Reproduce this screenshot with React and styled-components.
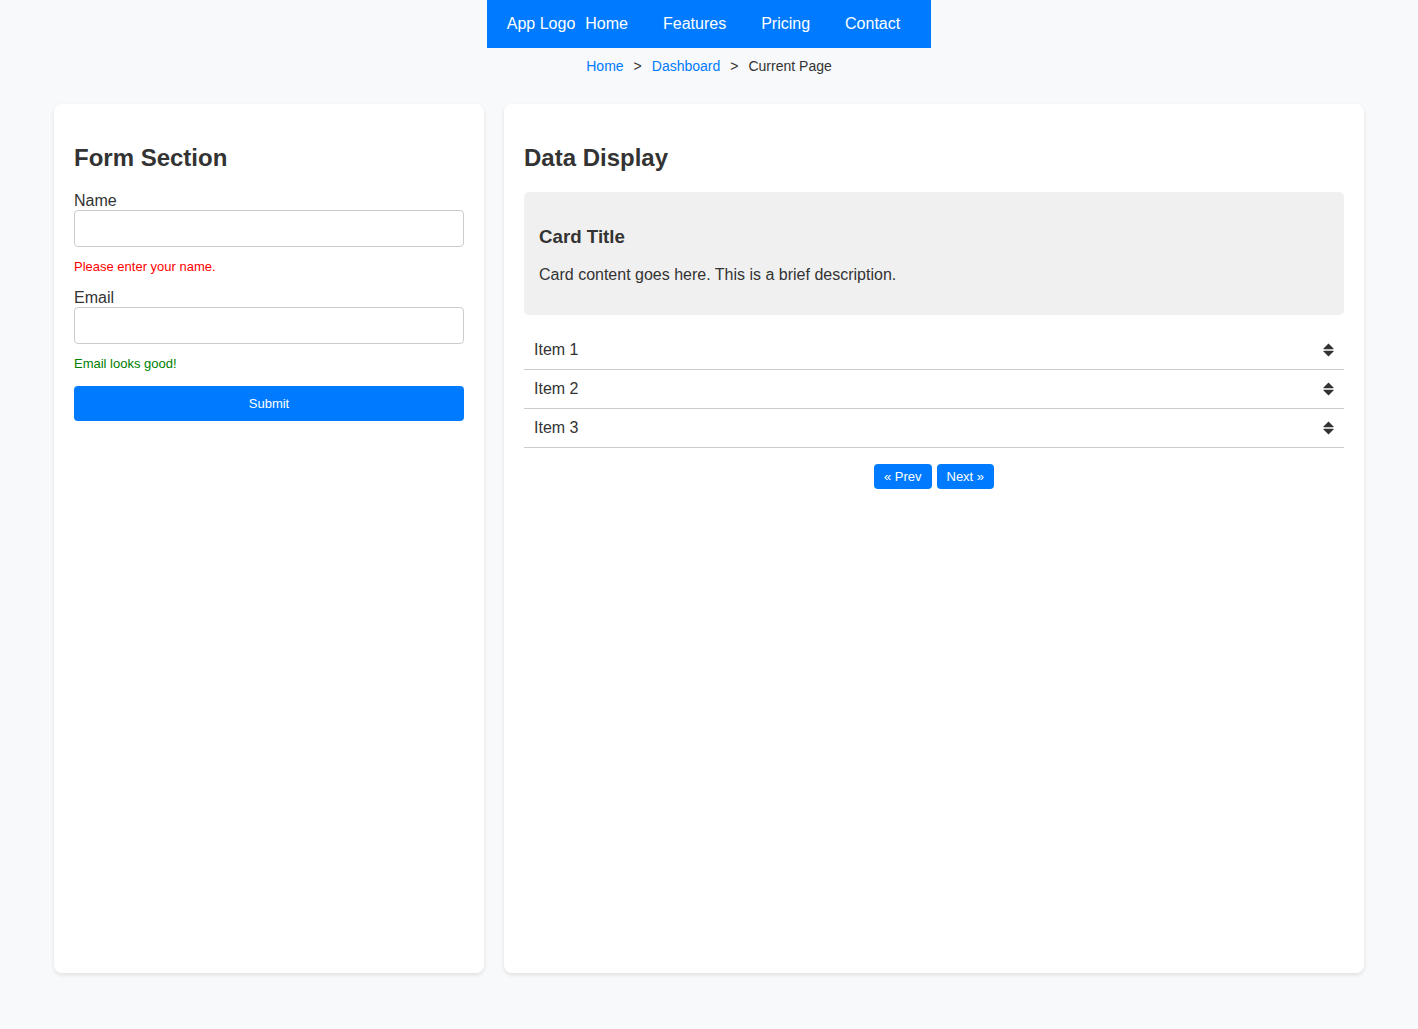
import React from 'react';
import styled, { createGlobalStyle } from 'styled-components';

const GlobalStyle = createGlobalStyle`
  * {
    box-sizing: border-box;
  }

  body {
    margin: 0;
    background-color: #f8f9fa;
    font-family: 'Liberation Sans', Arial, sans-serif;
    color: #333;
  }
`;

const NavBar = styled.nav`
  display: flex;
  align-items: center;
  width: max-content;
  margin: 0 auto;
  padding: 15px 31px 15px 20px;
  background-color: #007bff;
  color: #fff;
  font-size: 16px;
  line-height: 18px;
`;

const Logo = styled.span`
  margin-right: 10px;
`;

const NavLinks = styled.div`
  display: flex;
  gap: 35px;
`;

const NavLink = styled.a`
  color: #fff;
  text-decoration: none;
`;

const Breadcrumb = styled.div`
  display: flex;
  justify-content: center;
  gap: 10px;
  padding: 10px;
  font-size: 14px;
  line-height: 16px;
`;

const Crumb = styled.a`
  color: ${(p) => (p.current ? '#333' : '#007bff')};
  text-decoration: none;
`;

const Container = styled.main`
  display: grid;
  grid-template-columns: 1fr 2fr;
  gap: 20px;
  max-width: 1350px;
  margin: 0 auto;
  padding: 20px;
`;

const Panel = styled.section`
  min-height: calc(100vh - 160px);
  padding: 20px;
  background-color: #fff;
  border-radius: 8px;
  box-shadow: 0 2px 4px rgba(0, 0, 0, 0.1);
`;

const Heading = styled.h2`
  margin: 20px 0;
  font-size: 24px;
  line-height: 28px;
`;

const FormGroup = styled.div`
  margin-bottom: 15px;
`;

const Label = styled.label`
  display: block;
  font-size: 16px;
  line-height: 18px;
`;

const Input = styled.input`
  display: block;
  width: 100%;
  height: 37px;
  margin-bottom: 12px;
  padding: 8px;
  border: 1px solid #ccc;
  border-radius: 4px;
  font-size: 16px;
  font-family: inherit;
`;

const Message = styled.div`
  font-size: 13px;
  line-height: 15px;
  color: ${(p) => (p.ok ? 'green' : 'red')};
`;

const SubmitButton = styled.button`
  width: 100%;
  height: 35px;
  border: none;
  border-radius: 4px;
  background-color: #007bff;
  color: #fff;
  font-size: 13px;
  font-family: inherit;
`;

const Card = styled.div`
  padding: 15px;
  background-color: #f0f0f0;
  border-radius: 5px;

  h3 {
    margin: 19px 0 18px;
    font-size: 18.72px;
    line-height: 22px;
  }

  p {
    margin: 16px 0;
    font-size: 16px;
    line-height: 18px;
  }
`;

const List = styled.ul`
  margin: 16px 0;
  padding: 0;
  list-style: none;
`;

const ListItem = styled.li`
  display: flex;
  align-items: center;
  justify-content: space-between;
  padding: 10px;
  border-bottom: 1px solid #ccc;
  font-size: 16px;
  line-height: 18px;
`;

const Pagination = styled.div`
  display: flex;
  justify-content: center;
  gap: 5px;
`;

const PageButton = styled.button`
  height: 25px;
  padding: 0 10px;
  border: none;
  border-radius: 4px;
  background-color: #007bff;
  color: #fff;
  font-size: 13px;
  font-family: inherit;
`;

const SortIcon = () => (
  <svg width="11" height="14" viewBox="0 0 11 14" fill="#333">
    <path d="M5.5 0.5 L10.5 5.5 Q11 6.2 10 6.2 L1 6.2 Q0 6.2 0.5 5.5 Z" />
    <path d="M5.5 13.5 L10.5 8.5 Q11 7.8 10 7.8 L1 7.8 Q0 7.8 0.5 8.5 Z" />
  </svg>
);

const items = ['Item 1', 'Item 2', 'Item 3'];

const App = () => (
  <>
    <GlobalStyle />
    <NavBar>
      <Logo>App Logo</Logo>
      <NavLinks>
        <NavLink href="#">Home</NavLink>
        <NavLink href="#">Features</NavLink>
        <NavLink href="#">Pricing</NavLink>
        <NavLink href="#">Contact</NavLink>
      </NavLinks>
    </NavBar>
    <Breadcrumb>
      <Crumb href="#">Home</Crumb>
      <span>&gt;</span>
      <Crumb href="#">Dashboard</Crumb>
      <span>&gt;</span>
      <Crumb current>Current Page</Crumb>
    </Breadcrumb>
    <Container>
      <Panel>
        <Heading>Form Section</Heading>
        <form onSubmit={(e) => e.preventDefault()}>
          <FormGroup>
            <Label>Name</Label>
            <Input type="text" />
            <Message>Please enter your name.</Message>
          </FormGroup>
          <FormGroup>
            <Label>Email</Label>
            <Input type="email" />
            <Message ok>Email looks good!</Message>
          </FormGroup>
          <SubmitButton>Submit</SubmitButton>
        </form>
      </Panel>
      <Panel>
        <Heading>Data Display</Heading>
        <Card>
          <h3>Card Title</h3>
          <p>Card content goes here. This is a brief description.</p>
        </Card>
        <List>
          {items.map((item) => (
            <ListItem key={item}>
              {item}
              <SortIcon />
            </ListItem>
          ))}
        </List>
        <Pagination>
          <PageButton>« Prev</PageButton>
          <PageButton>Next »</PageButton>
        </Pagination>
      </Panel>
    </Container>
  </>
);

export default App;
